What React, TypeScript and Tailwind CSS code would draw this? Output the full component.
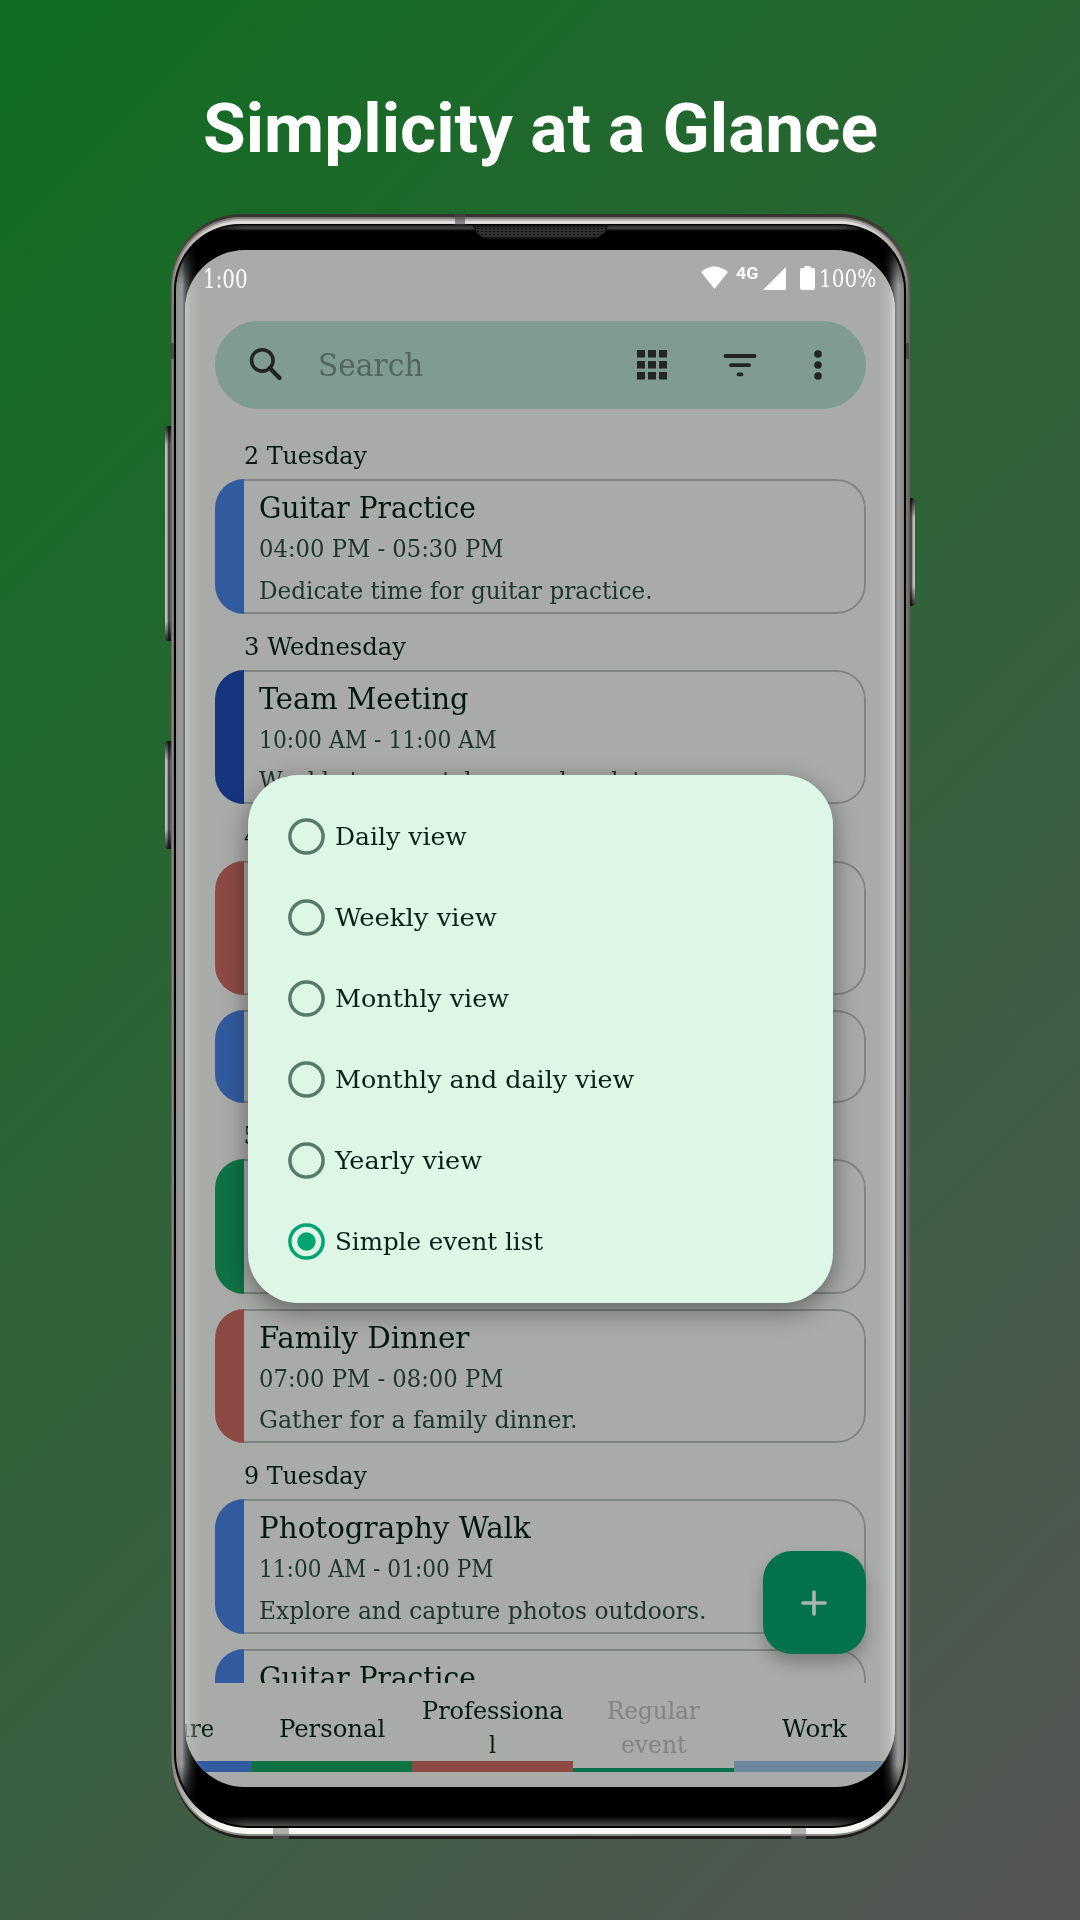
import { useLayoutEffect, useRef, useState } from "react";

const SLAB = "[font-family:'Roboto_Slab','DejaVu_Serif_Condensed','DejaVu_Serif',serif]";

/* Text stretched horizontally so that it fills exactly w pixels. */
function Fit({ w, className = "", children }: { w: number; className?: string; children: string }) {
  const ref = useRef<HTMLSpanElement>(null);
  const [s, setS] = useState(1);
  useLayoutEffect(() => {
    if (ref.current) setS(w / ref.current.offsetWidth);
  }, [w]);
  return (
    <span className={"block shrink-0 whitespace-nowrap " + className} style={{ width: w }}>
      <span ref={ref} className="inline-block origin-left" style={{ transform: `scaleX(${s})` }}>
        {children}
      </span>
    </span>
  );
}

function Day({ w, children }: { w: number; children: string }) {
  return (
    <Fit w={w} className="ml-[29px] h-[41.3px] text-[24.5px] leading-[36px] text-[#06190f]">
      {children}
    </Fit>
  );
}

function Card({ bar, h = 134.4, lines }: { bar: string; h?: number; lines: [string, number][] }) {
  return (
    <div className="relative mb-[15px] flex shrink-0 overflow-hidden rounded-[29px]" style={{ height: h }}>
      <div className={"w-[29px] shrink-0 " + bar} />
      <div className="pl-[15px] pt-[8px] text-[#20352c]">
        {lines.map(([t, w], i) => (
          <Fit
            key={t}
            w={w}
            className={i === 0 ? "h-[42px] text-[30px] leading-[41px] text-[#04180f]" : "h-[41.3px] text-[24px] leading-[41px]"}
          >
            {t}
          </Fit>
        ))}
      </div>
      <div className="pointer-events-none absolute inset-y-0 left-[29px] right-0 rounded-r-[29px] border-2 border-l-0 border-[#7f8581]" />
    </div>
  );
}

function Status() {
  return (
    <div className="flex h-[71px] items-start pl-[18px] text-white">
      <Fit w={45} className="mt-[13px] text-[26px] leading-[32px]">1:00</Fit>
      <svg className="ml-[452px] mt-[16px] h-[24px] w-[30px]" viewBox="0 0 30 24" fill="currentColor">
        <path d="M1 6Q14-5 28 6L14.500 23Z" />
      </svg>
      <Fit w={22} className="ml-[6px] mt-[11px] font-['Roboto'] text-[17px] font-bold leading-[24px]">4G</Fit>
      <svg className="ml-[5px] mt-[17px] h-[23px] w-[23px]" viewBox="0 0 23 23" fill="currentColor">
        <path d="M0 23L23 0V23Z" />
      </svg>
      <svg className="ml-[14px] mt-[16px] h-[24px] w-[15px]" viewBox="0 0 15 24" fill="currentColor">
        <path d="M4.500 0h6v2h2.500q2 0 2 2v18q0 2-2 2H2q-2 0-2-2V4q0-2 2-2h2.500z" />
      </svg>
      <Fit w={57} className="ml-[4px] mt-[13px] text-[25px] leading-[32px]">100%</Fit>
    </div>
  );
}

function SearchBar() {
  return (
    <div className="relative ml-[30px] mr-[29px] flex h-[88px] items-center rounded-full bg-[#809b91] text-[#232423]">
      <svg className="ml-[29.500px] h-[40px] w-[44px]" viewBox="0 0 44 40" fill="none" stroke="currentColor" strokeWidth="3.600">
        <circle cx="17.300" cy="15.400" r="10.700" />
        <path d="M24.800 23L34.500 33" strokeWidth="4.400" strokeLinecap="round" />
      </svg>
      <Fit w={105} className="ml-[29.500px] text-[32px] leading-[42px] text-[#52665e]">Search</Fit>
      <svg className="ml-[214px] h-[30px] w-[30px]" viewBox="0 0 30 30" fill="currentColor">
        {[0, 11, 22].map((y) => [0, 11, 22].map((x) => <rect key={x + "-" + y} x={x} y={y} width="8" height="7.500" />))}
      </svg>
      <svg className="ml-[56px] h-[24px] w-[34px]" viewBox="0 0 34 24" fill="none" stroke="currentColor" strokeWidth="3.800" strokeLinecap="round">
        <path d="M2.500 3H31.500M8 12.200H26M15.500 21.400H18.500" />
      </svg>
      <svg className="ml-[57px] h-[30px] w-[8px]" viewBox="0 0 8 30" fill="currentColor">
        {[4, 15, 26].map((y) => <circle key={y} cx="4" cy={y} r="3.800" />)}
      </svg>
    </div>
  );
}

const OPTIONS: [string, number][] = [
  ["Daily view", 132],
  ["Weekly view", 162],
  ["Monthly view", 174],
  ["Monthly and daily view", 299],
  ["Yearly view", 147],
  ["Simple event list", 208],
];

function Dialog() {
  return (
    <div className="absolute left-[63px] top-[524.500px] flex h-[528.500px] w-[584.500px] flex-col rounded-[50px] bg-[#ddf6e6] pt-[22px] shadow-[0_8px_26px_rgba(0,0,0,0.42)]">
      {OPTIONS.map(([t, w], i) => (
        <div key={t} className="flex h-[80.900px] items-center pl-[40px] text-[#0a2117]">
          <svg className="h-[37px] w-[37px]" viewBox="0 0 37 37" fill="none" stroke={i === 5 ? "#04a371" : "#597a6a"} strokeWidth="3.500">
            <circle cx="18.500" cy="18.500" r="16.600" />
            {i === 5 && <circle cx="18.500" cy="18.500" r="9.200" fill="#04a371" stroke="none" />}
          </svg>
          <Fit w={w} className="ml-[10px] mt-[1px] text-[24.500px] leading-[34px]">{t}</Fit>
        </div>
      ))}
    </div>
  );
}

function Tab({ bar, lines, dim }: { bar: string; lines: [string, number][]; dim?: boolean }) {
  return (
    <div className="flex h-[89px] w-[161px] shrink-0 flex-col">
      <div
        className={
          "flex h-[78px] flex-col items-center text-[24px] leading-[34px] " +
          (lines.length > 1 ? "pt-[11px] " : "pt-[29px] ") +
          (dim ? "text-[#7f8682]" : "text-[#06190f]")
        }
      >
        {lines.map(([t, w]) => <Fit key={t} w={w}>{t}</Fit>)}
      </div>
      <div className="flex h-[11px] shrink-0 items-end">
        <div className={"w-full " + bar} />
      </div>
    </div>
  );
}

function Screen() {
  return (
    <div className={"relative flex h-[1537px] w-[710px] flex-col overflow-hidden rounded-[60px] bg-[#a9aba8] " + SLAB}>
      <Status />
      <SearchBar />
      <div className="ml-[30px] mr-[29px] flex h-[1274px] flex-col overflow-hidden pt-[29px]">
        <Day w={123}>2 Tuesday</Day>
        <Card bar="bg-[#325b9f]" lines={[["Guitar Practice", 217], ["04:00 PM - 05:30 PM", 244], ["Dedicate time for guitar practice.", 394]]} />
        <Day w={162}>3 Wednesday</Day>
        <Card bar="bg-[#15367f]" lines={[["Team Meeting", 210], ["10:00 AM - 11:00 AM", 238], ["Weekly team catch-up and updates.", 415]]} />
        <Day w={130}>4 Thursday</Day>
        <Card bar="bg-[#8d4a45]" lines={[["Dentist", 105]]} />
        <Card bar="bg-[#325b9f]" h={93} lines={[["Yoga", 70]]} />
        <Day w={84}>5 Friday</Day>
        <Card bar="bg-[#0f7245]" lines={[["Gym", 70]]} />
        <Card bar="bg-[#8d4a45]" lines={[["Family Dinner", 210], ["07:00 PM - 08:00 PM", 244], ["Gather for a family dinner.", 319]]} />
        <Day w={123}>9 Tuesday</Day>
        <Card bar="bg-[#325b9f]" lines={[["Photography Walk", 272], ["11:00 AM - 01:00 PM", 235], ["Explore and capture photos outdoors.", 447]]} />
        <Card bar="bg-[#325b9f]" lines={[["Guitar Practice", 217]]} />
      </div>
      <div className="-ml-[95px] flex h-[89px] w-[806px] shrink-0">
        <Tab bar="h-[11px] bg-[#325b9f]" lines={[["Leisure", 86]]} />
        <Tab bar="h-[11px] bg-[#0f7245]" lines={[["Personal", 106]]} />
        <Tab bar="h-[11px] bg-[#8d4a45]" lines={[["Professiona", 141], ["l", 7]]} />
        <Tab bar="h-[4px] bg-[#04724b]" dim lines={[["Regular", 93], ["event", 65]]} />
        <Tab bar="h-[11px] bg-[#6c879e]" lines={[["Work", 65]]} />
      </div>
      <Dialog />
      <div className="absolute left-[578px] top-[1301px] flex h-[103px] w-[103px] items-center justify-center rounded-[29px] bg-[#02724c] shadow-[0_9px_16px_rgba(0,0,0,0.25)]">
        <svg className="mr-[2px] h-[26px] w-[26px]" viewBox="0 0 26 26" stroke="#a9b5ae" strokeWidth="3.600" strokeLinecap="round">
          <path d="M2 13H24M13 2V24" />
        </svg>
      </div>
      <div className="pointer-events-none absolute inset-0 bg-[linear-gradient(90deg,rgba(205,208,206,0.75)_0,rgba(190,192,190,0.4)_6px,transparent_16px,transparent_694px,rgba(195,197,195,0.5)_704px,rgba(215,218,216,0.85)_709px)]" />
    </div>
  );
}

/* Metal rim: nested rounded shells, bright along the top and bottom, dull on the sides. */
function Rim() {
  return (
    <>
      <div className="absolute inset-y-0 -inset-x-[0.500px] rounded-t-[70px] rounded-b-[78px] bg-[linear-gradient(180deg,#37332f_0,#68635f_80px,#68635f_1540px,#1f1e1b_1600px)]" />
      <div className="absolute inset-x-[1px] bottom-[3px] top-[3px] rounded-t-[69px] rounded-b-[76px] bg-[linear-gradient(180deg,#7b7773_0,#8a8682_80px,#8a8682_1540px,#8a8a86_1600px)]" />
      <div className="absolute inset-x-[1.500px] bottom-[5px] top-[5px] rounded-t-[68px] rounded-b-[75px] bg-[linear-gradient(180deg,#b9b7b5_0,#9b9995_40px,#77736f_80px,#77736f_1530px,#b5b5b2_1580px,#f7f7f3_1606px)]" />
      <div className="absolute inset-x-[2px] bottom-[6px] top-[7px] rounded-t-[68px] rounded-b-[74px] bg-[linear-gradient(180deg,#e2e1e0_0,#c0beba_20px,#77736f_80px,#77736f_1530px,#b5b5b2_1580px,#f7f7f3_1604px)]" />
      <div className="absolute inset-x-[3px] bottom-[11px] top-[10px] overflow-hidden rounded-t-[66px] rounded-b-[74px] bg-black">
        <div className="absolute inset-x-[2px] bottom-[2px] top-[1px] overflow-hidden rounded-t-[65px] rounded-b-[72px]">
          <div className="absolute inset-y-0 left-0 w-[21px] bg-[linear-gradient(90deg,#8e8e8f_0,#9a9a9b_6px,#5c6266_9px,#222_15px,#000_21px)] [mask-image:linear-gradient(transparent_16px,#000_60px,#000_1540px,transparent_1580px)]" />
          <div className="absolute inset-y-0 right-0 w-[21px] bg-[linear-gradient(270deg,#858587_0,#9a9a9b_6px,#6a6a6c_10px,#222_15px,#000_21px)] [mask-image:linear-gradient(transparent_16px,#000_60px,#000_1540px,transparent_1580px)]" />
          <div className="absolute inset-x-0 bottom-0 h-[10px] bg-[linear-gradient(#000,#4d4d4d)] [mask-image:linear-gradient(90deg,transparent_20px,#000_70px,#000_660px,transparent_710px)]" />
          <div className="absolute inset-x-0 top-0 h-[6px] bg-[linear-gradient(#1a1a1a,#484848_50%,#000)] [mask-image:linear-gradient(90deg,transparent_20px,#000_70px,#000_660px,transparent_710px)]" />
        </div>
        <div className="absolute left-[298px] top-px h-[14px] w-[137px] bg-[#151515] [clip-path:polygon(0_0,100%_0,97%_50%,92%_90%,88%_100%,12%_100%,8%_90%,3%_50%)]">
          <div className="absolute inset-x-[4px] bottom-[2px] top-[2px] bg-[radial-gradient(#0c0c0c_28%,#303030_45%)] bg-[size:4px_3px]" />
        </div>
      </div>
      <div className="absolute left-[284px] top-0 h-[11px] w-[10px] bg-[#4a4548]/60" />
      <div className="absolute bottom-0 left-[102px] h-[11px] w-[16px] bg-[#777]/55" />
      <div className="absolute bottom-0 left-[620px] h-[11px] w-[15px] bg-[#777]/55" />
      <div className="absolute left-0 top-[129px] h-[16px] w-[3px] bg-[#3e3b38]/70" />
      <div className="absolute right-0 top-[129px] h-[16px] w-[3px] bg-[#3e3b38]/70" />
    </>
  );
}

const BTN =
  "absolute w-[7px] overflow-hidden rounded-l-[4px] bg-[linear-gradient(180deg,#000c_0,transparent_20px,transparent_calc(100%-20px),#000c_100%),linear-gradient(90deg,#c8c8c8_0,#b0b0b0_30%,#333_55%,#555_75%,#bbb)]";

export default function App() {
  return (
    <div className="flex h-[1920px] w-[1080px] flex-col items-center overflow-hidden bg-[linear-gradient(135deg,#0f6e20_0%,#555555_100%)]">
      <h1 className="flex h-[214px] items-center justify-center pt-[43px] font-['Roboto'] text-[69px] font-bold leading-none text-white">
        <Fit w={675}>Simplicity at a Glance</Fit>
      </h1>
      <div className="relative">
        <div className={BTN + " -left-[6px] top-[212px] h-[215px]"} />
        <div className={BTN + " -left-[6px] top-[527px] h-[108px]"} />
        <div className={BTN + " -right-[6px] top-[284px] h-[108px] -scale-x-100"} />
        <div className="relative h-[1625px] w-[738px]">
          <Rim />
          <div className="relative ml-[14px] pt-[36px]">
            <Screen />
          </div>
        </div>
      </div>
    </div>
  );
}
